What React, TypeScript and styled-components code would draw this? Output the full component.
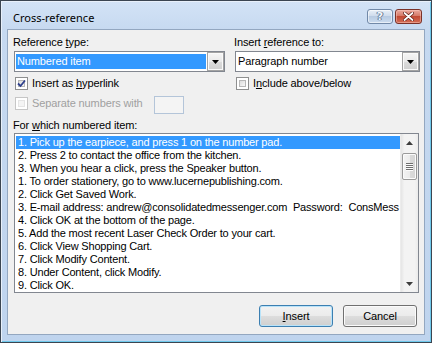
import React from "react";
import styled, { createGlobalStyle, css } from "styled-components";

const GlobalStyle = createGlobalStyle`
  html, body { margin: 0; padding: 0; background: #ffffff; }
  body {
    width: 432px; height: 343px; overflow: hidden;
    font-family: "Liberation Sans", Arial, sans-serif;
    font-size: 11px; color: #000;
    letter-spacing: -0.12px;
  }
  * { box-sizing: border-box; }
`;

const Window = styled.div`
  width: 432px;
  height: 343px;
  border: 1px solid #3b4551;
  background: linear-gradient(to bottom, #d3e3f6 0px, #c6d9f0 30px, #bfd4ee 100%);
  box-shadow: inset 1px 1px 0 #e8f0fa, inset -1px -1px 0 #6fc9ec;
  padding: 0 6px 7px 6px;
  display: flex;
  flex-direction: column;
`;

const TitleBar = styled.div`
  height: 28px;
  display: flex;
  align-items: flex-start;
  padding-left: 6px;
`;

const Title = styled.div`
  font-family: "Noto Sans", "Liberation Sans", sans-serif;
  font-size: 11px;
  letter-spacing: 0;
  line-height: 15px;
  margin-top: 9px;
  color: #000;
`;

const CaptionButtons = styled.div`
  margin-left: auto;
  margin-right: 3px;
  margin-top: 8px;
  display: flex;
  gap: 2px;
`;

const CaptionButton = styled.div<{ $kind: "help" | "close" }>`
  height: 15px;
  border-radius: 3px;
  display: flex;
  align-items: center;
  justify-content: center;
  ${(p) =>
    p.$kind === "help"
      ? css`
          width: 26px;
          border: 1px solid #7189a8;
          background: linear-gradient(to bottom, #e9f0f8 0%, #cfdcec 45%, #b8cbe2 50%, #cbdcef 100%);
          box-shadow: inset 0 0 0 1px rgba(255, 255, 255, 0.55);
        `
      : css`
          width: 27px;
          border: 1px solid #7a3128;
          background: linear-gradient(to bottom, #eaa99e 0%, #d67a68 45%, #c24a34 50%, #d36d55 100%);
          box-shadow: inset 0 0 0 1px rgba(255, 210, 200, 0.45);
        `}
`;

const HelpGlyph = styled.span`
  font-family: "DejaVu Sans", sans-serif;
  font-weight: bold;
  font-size: 11px;
  line-height: 11px;
  color: #f4f7fb;
  text-shadow: 0 0 1px #4e6480, 0 0 1px #4e6480, 1px 0 0 #6f86a4, -1px 0 0 #6f86a4;
`;

const Client = styled.div`
  flex: 1;
  border: 1px solid #93a7c0;
  background: #f0f0f0;
  padding: 6px 4px 0 6px;
  display: flex;
  flex-direction: column;
`;

const TopGrid = styled.div`
  display: grid;
  grid-template-columns: 211px 185px;
  column-gap: 10px;
`;

const Field = styled.div`
  display: flex;
  flex-direction: column;
`;

const Label = styled.div<{ $gap?: number }>`
  height: 13px;
  line-height: 13px;
  margin-left: -1px;
  margin-top: ${(p) => p.$gap ?? 0}px;
  white-space: nowrap;
`;

const Combo = styled.div`
  margin-top: 2px;
  height: 21px;
  border: 1px solid #828790;
  background: #fff;
  display: flex;
  align-items: stretch;
`;

const ComboText = styled.div<{ $selected?: boolean }>`
  flex: 1;
  margin: 2px 1px;
  padding-left: 1px;
  line-height: 15px;
  white-space: nowrap;
  ${(p) =>
    p.$selected &&
    css`
      background: #3399ff;
      color: #fff;
    `}
`;

const DropButton = styled.div`
  width: 17px;
  border: 1px solid #a3a3a3;
  background: linear-gradient(to bottom, #f6f6f6 0%, #e9e9e9 50%, #dcdcdc 51%, #cfcfcf 100%);
  box-shadow: inset 0 0 0 1px #fafafa;
  display: flex;
  align-items: center;
  justify-content: center;
`;

const CheckRow = styled.div<{ $gap: number; $disabled?: boolean }>`
  margin-top: ${(p) => p.$gap}px;
  height: 13px;
  line-height: 13px;
  display: flex;
  align-items: flex-start;
  gap: 4px;
  padding-left: 1px;
  white-space: nowrap;
  color: ${(p) => (p.$disabled ? "#a0a0a0" : "#000")};
`;

const SeparateRow = styled.div`
  margin-top: 6px;
  height: 18px;
  display: grid;
  grid-template-columns: 140px 30px;
`;

const Box = styled.div<{ $disabled?: boolean }>`
  width: 13px;
  height: 13px;
  flex: none;
  border: 1px solid ${(p) => (p.$disabled ? "#c6c6c6" : "#8e8f8f")};
  background: #fff;
  padding: 2px;
  display: flex;
`;

const BoxInner = styled.div<{ $disabled?: boolean }>`
  flex: 1;
  border: 1px solid ${(p) => (p.$disabled ? "#e4e4e4" : "#b7b7b7")};
  background: ${(p) =>
    p.$disabled ? "#f4f4f4" : "linear-gradient(135deg, #dcdcdc 0%, #f8f8f8 100%)"};
  position: relative;
`;

const CheckMark = styled.svg`
  position: absolute;
  left: -2px;
  top: -2px;
`;

const SmallTextBox = styled.div`
  width: 30px;
  height: 18px;
  border: 1px solid #b4c5d9;
  background: #f4f4f4;
`;

const ListBox = styled.div`
  margin-top: 1px;
  margin-right: 1px;
  height: 160px;
  border: 1px solid #828790;
  background: #fff;
  display: flex;
`;

const Items = styled.div`
  flex: 1;
  padding: 2px 0 0 1px;
  overflow: hidden;
  letter-spacing: -0.18px;
`;

const Item = styled.div<{ $selected?: boolean }>`
  height: 13px;
  line-height: 13px;
  padding-left: 2px;
  white-space: pre;
  ${(p) =>
    p.$selected &&
    css`
      background: #3399ff;
      color: #fff;
    `}
`;

const ScrollBar = styled.div`
  width: 18px;
  background: linear-gradient(to right, #e5e5e5 0%, #f3f3f3 20%, #f3f3f3 80%, #ebebeb 100%);
  border-left: 1px solid #ececec;
  display: flex;
  flex-direction: column;
`;

const ScrollArrow = styled.div`
  height: 17px;
  display: flex;
  align-items: center;
  justify-content: center;
`;

const Thumb = styled.div`
  margin: 2px 1px 0 1px;
  height: 27px;
  border: 1px solid #9b9b9b;
  border-radius: 2px;
  background: linear-gradient(to right, #f4f4f4 0%, #ececec 50%, #dadada 51%, #d6d6d6 100%);
  box-shadow: inset 0 0 0 1px #fbfbfb;
  display: flex;
  flex-direction: column;
  align-items: center;
  justify-content: center;
  gap: 1px;
`;

const Grip = styled.div`
  width: 7px;
  height: 1px;
  background: #6f6f6f;
  box-shadow: 0 1px 0 #fcfcfc;
`;

const Track = styled.div`
  flex: 1;
`;

const ButtonRow = styled.div`
  margin-top: 12px;
  margin-right: 3px;
  display: flex;
  justify-content: flex-end;
  gap: 10px;
`;

const PushButton = styled.div<{ $default?: boolean }>`
  width: 74px;
  height: 22px;
  border-radius: 3px;
  border: 1px solid ${(p) => (p.$default ? "#3c7fb1" : "#707070")};
  background: linear-gradient(to bottom, #f2f2f2 0%, #ebebeb 50%, #dddddd 51%, #cfcfcf 100%);
  box-shadow: inset 0 0 0 1px ${(p) => (p.$default ? "#b9e3f9" : "#fbfbfb")};
  display: flex;
  align-items: center;
  justify-content: center;
  line-height: 13px;
`;

const Key = styled.span`
  text-decoration: underline;
  text-underline-offset: 1px;
`;

const DownArrow = () => (
  <svg width="7" height="4" viewBox="0 0 7 4">
    <path d="M0 0H7L3.5 4Z" fill="#000" />
  </svg>
);

const items = [
  "1. Pick up the earpiece, and press 1 on the number pad.",
  "2. Press 2 to contact the office from the kitchen.",
  "3. When you hear a click, press the Speaker button.",
  "1. To order stationery, go to www.lucernepublishing.com.",
  "2. Click Get Saved Work.",
  "3. E-mail address: andrew@consolidatedmessenger.com  Password:  ConsMess",
  "4. Click OK at the bottom of the page.",
  "5. Add the most recent Laser Check Order to your cart.",
  "6. Click View Shopping Cart.",
  "7. Click Modify Content.",
  "8. Under Content, click Modify.",
  "9. Click OK.",
];

const CheckBox = ({ checked, disabled }: { checked?: boolean; disabled?: boolean }) => (
  <Box $disabled={disabled}>
    <BoxInner $disabled={disabled}>
      {checked && (
        <CheckMark width="9" height="9" viewBox="0 0 9 9">
          <path d="M1 4.5L3.5 7L8 1.5" fill="none" stroke="#2d3f8c" strokeWidth="1.8" />
        </CheckMark>
      )}
    </BoxInner>
  </Box>
);

export default function App() {
  return (
    <>
      <GlobalStyle />
      <Window>
        <TitleBar>
          <Title>Cross-reference</Title>
          <CaptionButtons>
            <CaptionButton $kind="help">
              <HelpGlyph>?</HelpGlyph>
            </CaptionButton>
            <CaptionButton $kind="close">
              <svg width="11" height="9" viewBox="0 0 11 9">
                <path d="M1.5 1L9.5 8M9.5 1L1.5 8" stroke="#5b1a12" strokeWidth="3.2" strokeLinecap="round" />
                <path d="M1.5 1L9.5 8M9.5 1L1.5 8" stroke="#ffffff" strokeWidth="1.8" strokeLinecap="round" />
              </svg>
            </CaptionButton>
          </CaptionButtons>
        </TitleBar>
        <Client>
          <TopGrid>
            <Field>
              <Label>
                Reference <Key>t</Key>ype:
              </Label>
              <Combo>
                <ComboText $selected>Numbered item</ComboText>
                <DropButton>
                  <DownArrow />
                </DropButton>
              </Combo>
              <CheckRow $gap={5}>
                <CheckBox checked />
                <span>
                  Insert as <Key>h</Key>yperlink
                </span>
              </CheckRow>
              <SeparateRow>
                <CheckRow $gap={1} $disabled>
                  <CheckBox disabled />
                  <span>Separate numbers with</span>
                </CheckRow>
                <SmallTextBox />
              </SeparateRow>
            </Field>
            <Field>
              <Label>
                Insert <Key>r</Key>eference to:
              </Label>
              <Combo>
                <ComboText>Paragraph number</ComboText>
                <DropButton>
                  <DownArrow />
                </DropButton>
              </Combo>
              <CheckRow $gap={5}>
                <CheckBox />
                <span>
                  I<Key>n</Key>clude above/below
                </span>
              </CheckRow>
            </Field>
          </TopGrid>
          <Label $gap={5}>
            For <Key>w</Key>hich numbered item:
          </Label>
          <ListBox>
            <Items>
              {items.map((t, i) => (
                <Item key={i} $selected={i === 0}>
                  {t}
                </Item>
              ))}
            </Items>
            <ScrollBar>
              <ScrollArrow>
                <svg width="7" height="4" viewBox="0 0 7 4">
                  <path d="M0 4H7L3.5 0Z" fill="#3d3d3d" />
                </svg>
              </ScrollArrow>
              <Thumb>
                <Grip />
                <Grip />
                <Grip />
                <Grip />
              </Thumb>
              <Track />
              <ScrollArrow>
                <svg width="7" height="4" viewBox="0 0 7 4">
                  <path d="M0 0H7L3.5 4Z" fill="#3d3d3d" />
                </svg>
              </ScrollArrow>
            </ScrollBar>
          </ListBox>
          <ButtonRow>
            <PushButton $default>
              <span>
                <Key>I</Key>nsert
              </span>
            </PushButton>
            <PushButton>Cancel</PushButton>
          </ButtonRow>
        </Client>
      </Window>
    </>
  );
}
